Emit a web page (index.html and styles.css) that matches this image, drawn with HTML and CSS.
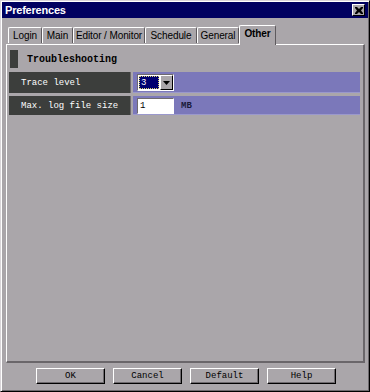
FILE: index.html
```html
<!DOCTYPE html>
<html>
<head>
<meta charset="utf-8">
<link rel="stylesheet" href="styles.css">
</head>
<body>
<div class="window">
  <div class="titlebar">
    <span class="title">Preferences</span>
    <span class="close">
      <svg width="8" height="7" viewBox="0 0 8 7"><path d="M0 0h2l2 2 2-2h2v1L6 3.5 8 6v1H6L4 5 2 7H0V6l2-2.5L0 1z" fill="#000"/></svg>
    </span>
  </div>
  <div class="tabs">
    <div class="tab t-login">Login</div>
    <div class="tab t-main">Main</div>
    <div class="tab t-editor">Editor / Monitor</div>
    <div class="tab t-sched">Schedule</div>
    <div class="tab t-gen">General</div>
    <div class="tab active t-other">Other</div>
  </div>
  <div class="panel">
    <div class="section">
      <span class="marker"></span>
      <span class="section-title">Troubleshooting</span>
    </div>
    <div class="row">
      <div class="label">Trace level</div>
      <div class="value">
        <div class="select">
          <span class="select-field"><span class="select-text">3</span></span>
          <span class="select-btn">
            <svg width="7" height="4" viewBox="0 0 7 4"><path d="M0 0h7L3.5 4z" fill="#000"/></svg>
          </span>
        </div>
      </div>
    </div>
    <div class="row row2">
      <div class="label">Max. log file size</div>
      <div class="value">
        <span class="input">1</span>
        <span class="unit">MB</span>
      </div>
    </div>
  </div>
  <div class="buttons">
    <div class="btn">OK</div>
    <div class="btn">Cancel</div>
    <div class="btn">Default</div>
    <div class="btn">Help</div>
  </div>
</div>
</body>
</html>
```

FILE: styles.css
```css
html, body {
  margin: 0;
  padding: 0;
  background: #aaa6aa;
}
.window {
  width: 370px;
  height: 392px;
  box-sizing: border-box;
  background: #aaa6aa;
  border: 1px solid;
  border-color: #d8d4d8 #000000 #000000 #d8d4d8;
  box-shadow: inset 1px 1px 0 #ffffff, inset -1px -1px 0 #6e6a6e;
  display: flex;
  flex-direction: column;
  font-family: "Liberation Sans", Arial, sans-serif;
}
.titlebar {
  height: 16px;
  margin: 1px 1px 0 1px;
  background: #000060;
  display: flex;
  align-items: center;
  justify-content: space-between;
  padding: 0 3px 0 3px;
}
.title {
  color: #ffffff;
  font-weight: bold;
  font-size: 11px;
  letter-spacing: -0.2px;
}
.close {
  width: 11px;
  height: 10px;
  background: #aaa6aa;
  border: 1px solid;
  border-color: #ffffff #000000 #000000 #ffffff;
  display: flex;
  align-items: center;
  justify-content: center;
}
.tabs {
  display: flex;
  align-items: flex-end;
  margin: 7px 0 0 7px;
  height: 19px;
  position: relative;
  z-index: 1;
}
.tab {
  height: 16px;
  box-sizing: border-box;
  border-top: 1px solid #ffffff;
  border-left: 1px solid #ffffff;
  border-right: 1px solid #5e5a5e;
  border-radius: 2px 2px 0 0;
  font-size: 10px;
  letter-spacing: -0.1px;
  white-space: nowrap;
  color: #000;
  display: flex;
  align-items: center;
  justify-content: center;
  margin-bottom: 1px;
}
.t-login { width: 34px; }
.t-main { width: 31px; }
.t-editor { width: 72px; }
.t-sched { width: 52px; }
.t-gen { width: 42px; }
.t-other { width: 37px; }
.tab.active {
  height: 20px;
  margin-bottom: -1px;
  background: #aaa6aa;
  font-weight: bold;
  align-items: flex-start;
  padding-top: 2px;
}
.panel {
  margin: 0 4px 0 5px;
  height: 319px;
  box-sizing: border-box;
  border-top: 1px solid #ffffff;
  border-left: 1px solid #ffffff;
  border-right: 2px solid #6a666a;
  border-bottom: 2px solid #6a666a;
  padding: 5px 3px 0 2px;
  display: flex;
  flex-direction: column;
}
.section {
  display: flex;
  align-items: center;
  height: 18px;
  margin-left: 1px;
}
.marker {
  width: 8px;
  height: 18px;
  background: #3c3e3c;
}
.section-title {
  margin-left: 9px;
  font-family: "Liberation Mono", "Courier New", monospace;
  font-weight: bold;
  font-size: 10px;
  color: #000;
}
.row {
  display: flex;
  margin-top: 4px;
  height: 21px;
}
.row2 {
  margin-top: 3px;
  height: 19px;
}
.label {
  width: 122px;
  background: #3c3e3c;
  color: #ffffff;
  font-family: "Liberation Mono", "Courier New", monospace;
  font-size: 9px;
  display: flex;
  align-items: center;
  padding-left: 12px;
  box-sizing: border-box;
  border-right: 1px solid #6e6a6e;
}
.value {
  flex: 1;
  background: #7b78ba;
  margin-left: 2px;
  display: flex;
  align-items: center;
  padding-left: 4px;
  box-shadow: inset 0 -1px 0 #9a98cc;
}
.select {
  display: flex;
  width: 37px;
  height: 17px;
  box-sizing: border-box;
  border: 1px solid;
  border-color: #6e6a6e #ffffff #ffffff #6e6a6e;
}
.select-field {
  flex: 1;
  background: #ffffff;
  padding: 1px;
  display: flex;
}
.select-text {
  flex: 1;
  background: #000070;
  color: #ffffff;
  outline: 1px dotted #d8d070;
  outline-offset: -1px;
  font-family: "Liberation Mono", "Courier New", monospace;
  font-size: 9px;
  padding-left: 2px;
  display: flex;
  align-items: center;
}
.select-btn {
  width: 13px;
  background: #aaa6aa;
  box-sizing: border-box;
  border: 1px solid;
  border-color: #ffffff #000000 #000000 #ffffff;
  display: flex;
  align-items: center;
  justify-content: center;
}
.input {
  width: 37px;
  height: 16px;
  box-sizing: border-box;
  background: #ffffff;
  border: 1px solid;
  border-color: #6e6a6e #ffffff #ffffff #6e6a6e;
  font-family: "Liberation Mono", "Courier New", monospace;
  font-size: 9px;
  padding-left: 2px;
  display: flex;
  align-items: center;
}
.unit {
  margin-left: 7px;
  font-family: "Liberation Mono", "Courier New", monospace;
  font-size: 9px;
  font-weight: bold;
  color: #1a1a3a;
}
.buttons {
  display: flex;
  justify-content: center;
  gap: 8px;
  margin-top: 5px;
  padding-left: 2px;
}
.btn {
  width: 69px;
  height: 16px;
  box-sizing: border-box;
  border: 1px solid;
  border-color: #ffffff #000000 #000000 #ffffff;
  box-shadow: inset -1px -1px 0 #6e6a6e;
  font-family: "Liberation Mono", "Courier New", monospace;
  font-size: 9px;
  display: flex;
  align-items: center;
  justify-content: center;
  color: #000;
}
```
